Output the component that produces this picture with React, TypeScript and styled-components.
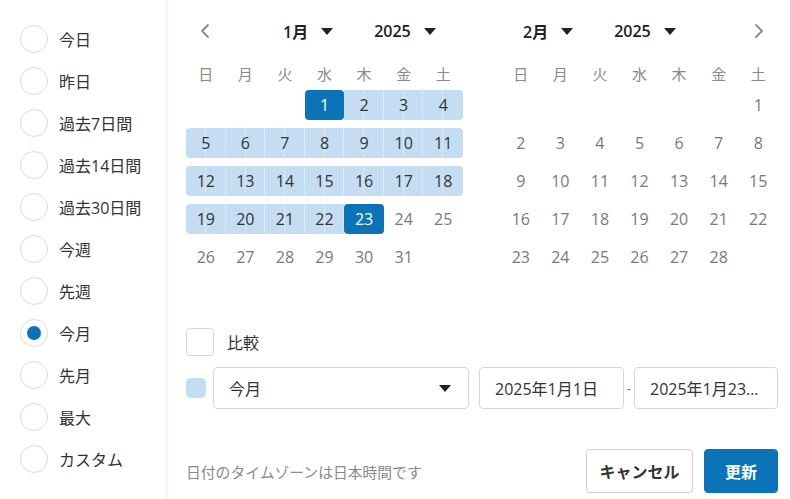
import React, { useState } from "react";
import styled, { createGlobalStyle } from "styled-components";

const palette = {
  text: "#333333",
  muted: "#7a7a7a",
  border: "#d3d7dc",
  band: "#c5ddf3",
  blue: "#0b73b8",
};

const GlobalStyle = createGlobalStyle`
  * { box-sizing: border-box; }
  body {
    margin: 0;
    background: #ffffff;
    font-family: "Open Sans", "Noto Sans CJK JP", sans-serif;
    color: ${palette.text};
  }
`;

const Wrapper = styled.div`
  display: flex;
  width: 790px;
  height: 499px;
  background: #fff;
  overflow: hidden;
`;

/* 左側のプリセット */
const Sidebar = styled.ul`
  width: 167px;
  flex-shrink: 0;
  margin: 0;
  padding: 18px 0 0 20px;
  list-style: none;
  border-right: 1px solid #eeeeee;
  box-shadow: 1px 0 3px rgba(0, 0, 0, 0.04);
`;

const Option = styled.li`
  display: flex;
  align-items: center;
  height: 42px;
  gap: 11px;
  font-size: 16px;
  cursor: pointer;
`;

const Radio = styled.span<{ $checked: boolean }>`
  width: 28px;
  height: 28px;
  border-radius: 50%;
  border: 1.5px solid #d8dce1;
  display: flex;
  align-items: center;
  justify-content: center;

  &::after {
    content: "";
    display: ${(p) => (p.$checked ? "block" : "none")};
    width: 14px;
    height: 14px;
    border-radius: 50%;
    background: ${palette.blue};
  }
`;

const Main = styled.div`
  flex: 1;
  padding: 17px 13px 0 19px;
  display: flex;
  flex-direction: column;
`;

const Calendars = styled.div`
  display: flex;
  gap: 38px;
`;

const Month = styled.div`
  width: 277px;
`;

const Header = styled.div`
  display: flex;
  align-items: center;
  height: 28px;
`;

const NavButton = styled.button<{ $right?: boolean }>`
  width: 38px;
  height: 28px;
  padding: 0;
  border: none;
  background: transparent;
  display: flex;
  align-items: center;
  justify-content: center;
  margin-left: ${(p) => (p.$right ? "auto" : "0")};
  cursor: pointer;
`;

const Selects = styled.div<{ $offset: number }>`
  display: flex;
  gap: 41px;
  margin-left: ${(p) => p.$offset}px;
`;

const HeaderSelect = styled.div`
  display: flex;
  align-items: center;
  gap: 13px;
  font-size: 16px;
  font-weight: 600;
  color: #222;
`;

const Weekdays = styled.div`
  display: grid;
  grid-template-columns: repeat(7, 1fr);
  margin-top: 16px;
  height: 24px;
  align-items: center;
  font-size: 15px;
  color: #8a8a8a;
  text-align: center;
`;

const Weeks = styled.div`
  display: flex;
  flex-direction: column;
  gap: 8px;
  margin-top: 5px;
`;

const Week = styled.div`
  display: grid;
  grid-template-columns: repeat(7, 1fr);
  height: 30px;
`;

const Day = styled.div<{ $inRange: boolean; $selected: boolean; $start: boolean; $end: boolean }>`
  display: flex;
  align-items: center;
  justify-content: center;
  font-size: 16px;
  color: ${(p) => (p.$selected ? "#fff" : p.$inRange ? palette.text : palette.muted)};
  background-color: ${(p) => (p.$selected ? palette.blue : p.$inRange ? palette.band : "transparent")};
  background-image: ${(p) =>
    p.$inRange && !p.$selected
      ? "linear-gradient(90deg, transparent calc(50% - 0.5px), rgba(255,255,255,0.35) calc(50% - 0.5px), rgba(255,255,255,0.35) calc(50% + 0.5px), transparent calc(50% + 0.5px))"
      : "none"};
  box-shadow: ${(p) => (p.$inRange && !p.$selected && !p.$end ? "inset -1px 0 rgba(255,255,255,0.35)" : "none")};
  border-radius: ${(p) =>
    p.$selected ? "4px" : `${p.$start ? 4 : 0}px ${p.$end ? 4 : 0}px ${p.$end ? 4 : 0}px ${p.$start ? 4 : 0}px`};
`;

/* 下部 */
const CompareRow = styled.label`
  display: flex;
  align-items: center;
  gap: 13px;
  margin-top: 56px;
  font-size: 16px;
`;

const Checkbox = styled.span`
  width: 28px;
  height: 28px;
  border: 1.5px solid ${palette.border};
  border-radius: 4px;
`;

const RangeRow = styled.div`
  display: flex;
  align-items: center;
  margin-top: 11px;
`;

const Swatch = styled.span`
  width: 20px;
  height: 20px;
  border-radius: 5px;
  background: ${palette.band};
  margin-right: 7px;
`;

const Field = styled.div<{ $width: number }>`
  width: ${(p) => p.$width}px;
  height: 42px;
  border: 1px solid ${palette.border};
  border-radius: 4px;
  display: flex;
  align-items: center;
  justify-content: space-between;
  padding: 0 17px 0 15px;
  font-size: 16px;
  color: ${palette.text};
  white-space: nowrap;

  span {
    overflow: hidden;
    text-overflow: ellipsis;
  }
`;

const Dash = styled.span`
  width: 10px;
  text-align: center;
  font-size: 12px;
  color: #666;
`;

const Footer = styled.div`
  display: flex;
  align-items: center;
  margin-top: 40px;
  gap: 11px;
`;

const Note = styled.p`
  flex: 1;
  margin: 0;
  font-size: 14.8px;
  color: #8a8a8a;
`;

const Button = styled.button<{ $primary?: boolean; $width: number }>`
  width: ${(p) => p.$width}px;
  height: 44px;
  padding: 0;
  border-radius: 4px;
  font-family: inherit;
  font-size: 16px;
  font-weight: 700;
  border: 1px solid ${(p) => (p.$primary ? palette.blue : "#cfd3d8")};
  background: ${(p) => (p.$primary ? palette.blue : "#fff")};
  color: ${(p) => (p.$primary ? "#fff" : "#333")};
  cursor: pointer;
`;

const Caret = () => (
  <svg width="12" height="7" viewBox="0 0 12 7">
    <path d="M0 0h12L6 7z" fill="#222" />
  </svg>
);

const Chevron = ({ right }: { right?: boolean }) => (
  <svg width="10" height="16" viewBox="0 0 10 16">
    <path
      d={right ? "M2 2l6 6-6 6" : "M8 2L2 8l6 6"}
      fill="none"
      stroke="#8a8a8a"
      strokeWidth="1.8"
      strokeLinecap="round"
      strokeLinejoin="round"
    />
  </svg>
);

const presets = ["今日", "昨日", "過去7日間", "過去14日間", "過去30日間", "今週", "先週", "今月", "先月", "最大", "カスタム"];
const weekdays = ["日", "月", "火", "水", "木", "金", "土"];

// 日付の配列を週ごとに分割
const buildWeeks = (firstDow: number, days: number) => {
  const cells: (number | null)[] = Array(firstDow).fill(null);
  for (let d = 1; d <= days; d += 1) cells.push(d);
  while (cells.length % 7 !== 0) cells.push(null);
  const weeks: (number | null)[][] = [];
  for (let i = 0; i < cells.length; i += 7) weeks.push(cells.slice(i, i + 7));
  return weeks;
};

interface MonthProps {
  label: string;
  firstDow: number;
  days: number;
  range?: [number, number];
  side: "left" | "right";
}

const MonthView: React.FC<MonthProps> = ({ label, firstDow, days, range, side }) => {
  const inRange = (d: number | null) => !!range && d !== null && d >= range[0] && d <= range[1];

  return (
    <Month>
      <Header>
        {side === "left" && (
          <NavButton>
            <Chevron />
          </NavButton>
        )}
        <Selects $offset={side === "left" ? 59 : 22}>
          <HeaderSelect>
            {label}
            <Caret />
          </HeaderSelect>
          <HeaderSelect>
            2025
            <Caret />
          </HeaderSelect>
        </Selects>
        {side === "right" && (
          <NavButton $right>
            <Chevron right />
          </NavButton>
        )}
      </Header>

      <Weekdays>
        {weekdays.map((w) => (
          <span key={w}>{w}</span>
        ))}
      </Weekdays>

      <Weeks>
        {buildWeeks(firstDow, days).map((week, wi) => (
          <Week key={wi}>
            {week.map((d, i) => {
              const on = inRange(d);
              const selected = !!range && (d === range[0] || d === range[1]);
              return (
                <Day
                  key={i}
                  $inRange={on}
                  $selected={selected}
                  $start={on && (i === 0 || !inRange(week[i - 1]))}
                  $end={on && (i === 6 || !inRange(week[i + 1]))}
                >
                  {d}
                </Day>
              );
            })}
          </Week>
        ))}
      </Weeks>
    </Month>
  );
};

const App: React.FC = () => {
  const [preset, setPreset] = useState("今月");

  return (
    <>
      <GlobalStyle />
      <Wrapper>
        <Sidebar>
          {presets.map((p) => (
            <Option key={p} onClick={() => setPreset(p)}>
              <Radio $checked={preset === p} />
              {p}
            </Option>
          ))}
        </Sidebar>

        <Main>
          <Calendars>
            <MonthView label="1月" firstDow={3} days={31} range={[1, 23]} side="left" />
            <MonthView label="2月" firstDow={6} days={28} side="right" />
          </Calendars>

          <CompareRow>
            <Checkbox />
            比較
          </CompareRow>

          <RangeRow>
            <Swatch />
            <Field $width={256}>
              <span>今月</span>
              <Caret />
            </Field>
            <div style={{ width: 10 }} />
            <Field $width={145}>
              <span>2025年1月1日</span>
            </Field>
            <Dash>-</Dash>
            <Field $width={144}>
              <span>2025年1月23日</span>
            </Field>
          </RangeRow>

          <Footer>
            <Note>日付のタイムゾーンは日本時間です</Note>
            <Button $width={107}>キャンセル</Button>
            <Button $primary $width={74}>
              更新
            </Button>
          </Footer>
        </Main>
      </Wrapper>
    </>
  );
};

export default App;
